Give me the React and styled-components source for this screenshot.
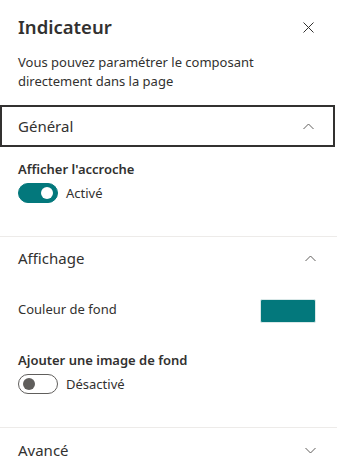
import React from "react";
import styled, { createGlobalStyle } from "styled-components";

const Global = createGlobalStyle`
  html, body { margin: 0; padding: 0; background: #fff; }
  body { font-family: "Segoe UI", "Noto Sans", "Open Sans", sans-serif; color: #323130; }
  * { box-sizing: border-box; }
`;

const Pane = styled.div`
  width: 337px;
  height: 469px;
  overflow: hidden;
  background: #fff;
  display: flex;
  flex-direction: column;
`;

const Header = styled.div`
  display: flex;
  align-items: center;
  justify-content: space-between;
  padding: 13px 23px 0 18px;
  height: 41px;
`;

const Title = styled.h1`
  margin: 0;
  font-size: 18.5px;
  font-weight: 600;
  line-height: 28px;
  color: #323130;
`;

const CloseButton = styled.button`
  border: 0;
  background: none;
  padding: 0;
  width: 11px;
  height: 11px;
  display: flex;
  align-items: center;
  justify-content: center;
  color: #323130;
`;

const Description = styled.p`
  margin: 12px 18px 0 18px;
  font-size: 13px;
  line-height: 19px;
  color: #323130;
`;

const Group = styled.section`
  border-top: ${(p) => (p.$divider ? "1px solid #edebe9" : "none")};
  padding-bottom: ${(p) => p.$pb || 0}px;
`;

const GroupHeader = styled.div`
  display: flex;
  align-items: center;
  justify-content: space-between;
  height: ${(p) => p.$h || 42}px;
  padding: 0 21px 0 18px;
  border: 2px solid ${(p) => (p.$focused ? "#323130" : "transparent")};
  border-width: ${(p) => (p.$focused ? "2px" : "0")};
  margin: ${(p) => p.$m || "0"};
  font-size: 15px;
  color: #323130;
  ${(p) => (p.$focused ? "padding-left: 16px; padding-right: 19px; margin-right: 2px;" : "")}
`;

const Field = styled.div`
  padding: 0 18px;
  margin-top: ${(p) => p.$mt || 0}px;
`;

const Label = styled.div`
  font-size: 13px;
  font-weight: 600;
  line-height: 20px;
  color: #323130;
`;

const ToggleRow = styled.div`
  display: flex;
  align-items: center;
  gap: 8px;
  margin-top: 4px;
  font-size: 13px;
  color: #323130;
`;

const Track = styled.span`
  width: 40px;
  height: 20px;
  border-radius: 10px;
  display: flex;
  align-items: center;
  padding: 0 4px;
  justify-content: ${(p) => (p.$on ? "flex-end" : "flex-start")};
  background: ${(p) => (p.$on ? "#03787c" : "#fff")};
  border: 1px solid ${(p) => (p.$on ? "#03787c" : "#605e5c")};
`;

const Thumb = styled.span`
  width: 12px;
  height: 12px;
  border-radius: 50%;
  background: ${(p) => (p.$on ? "#fff" : "#605e5c")};
`;

const ColorRow = styled.div`
  display: flex;
  align-items: flex-start;
  justify-content: space-between;
  padding: 0 21px 0 18px;
  margin-top: ${(p) => p.$mt || 0}px;
  font-size: 13px;
  line-height: 20px;
  color: #323130;
`;

const Swatch = styled.span`
  width: 56px;
  height: 24px;
  border-radius: 2px;
  background: #03787c;
  border: 1px solid #d9e8e8;
`;

const Chevron = ({ up }) => (
  <svg width="11" height="11" viewBox="0 0 11 11" fill="none">
    <path
      d={up ? "M0.5 8 L5.5 3 L10.5 8" : "M0.5 3 L5.5 8 L10.5 3"}
      stroke="#605e5c"
      strokeWidth="1"
    />
  </svg>
);

const Toggle = ({ on, text }) => (
  <ToggleRow>
    <Track $on={on}>
      <Thumb $on={on} />
    </Track>
    <span>{text}</span>
  </ToggleRow>
);

export default function App() {
  return (
    <Pane>
      <Global />
      <Header>
        <Title>Indicateur</Title>
        <CloseButton aria-label="Fermer">
          <svg width="11" height="11" viewBox="0 0 11 11">
            <path d="M0.5 0.5 L10.5 10.5 M10.5 0.5 L0.5 10.5" stroke="#323130" strokeWidth="1" />
          </svg>
        </CloseButton>
      </Header>
      <Description>Vous pouvez paramétrer le composant directement dans la page</Description>

      <Group $pb={33}>
        <GroupHeader $focused $m="14px 0 0 0">
          <span>Général</span>
          <Chevron up />
        </GroupHeader>
        <Field $mt={12}>
          <Label>Afficher l'accroche</Label>
          <Toggle on text="Activé" />
        </Field>
      </Group>

      <Group $divider $pb={33}>
        <GroupHeader $h={42}>
          <span>Affichage</span>
          <Chevron up />
        </GroupHeader>
        <ColorRow $mt={20}>
          <span>Couleur de fond</span>
          <Swatch />
        </ColorRow>
        <Field $mt={27}>
          <Label>Ajouter une image de fond</Label>
          <Toggle text="Désactivé" />
        </Field>
      </Group>

      <Group $divider>
        <GroupHeader $h={44}>
          <span>Avancé</span>
          <Chevron />
        </GroupHeader>
      </Group>
    </Pane>
  );
}
